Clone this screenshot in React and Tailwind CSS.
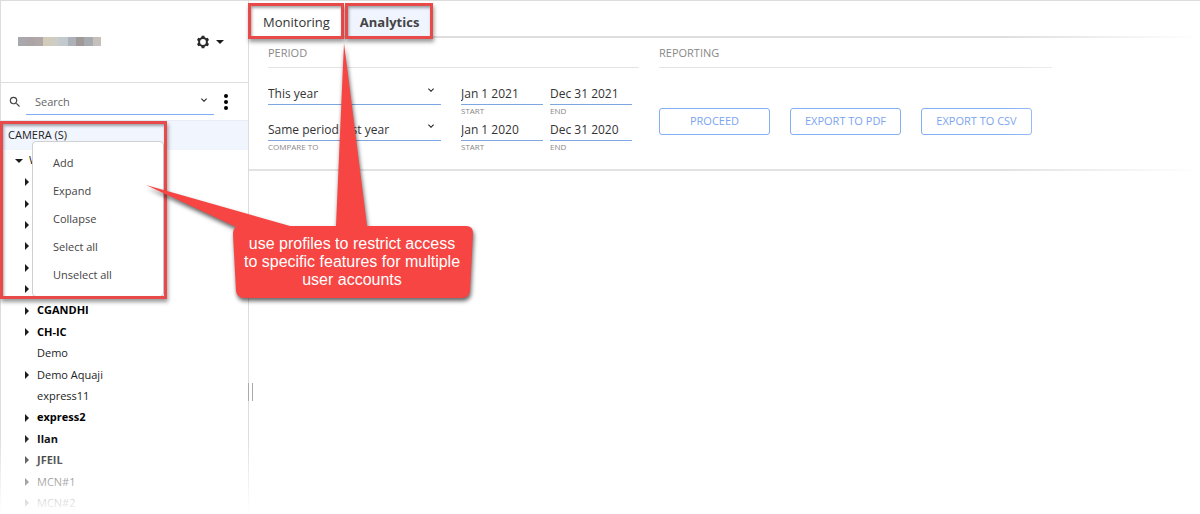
import React, { useState } from 'react';
import { MdSearch, MdKeyboardArrowDown } from 'react-icons/md';

const TREE = [
  { label: '' },
  { label: '' },
  { label: '' },
  { label: '' },
  { label: '' },
  { label: '' },
  { label: 'CGANDHI', bold: true },
  { label: 'CH-IC', bold: true },
  { label: 'Demo', leaf: true },
  { label: 'Demo Aquaji' },
  { label: 'express11', leaf: true },
  { label: 'express2', bold: true },
  { label: 'Ilan', bold: true },
  { label: 'JFEIL', bold: true },
  { label: 'MCN#1' },
  { label: 'MCN#2' },
];

const MENU_ITEMS = ['Add', 'Expand', 'Collapse', 'Select all', 'Unselect all'];

const MOSAIC = [
  'bg-[#a9a9ad]',
  'bg-[#aca5a8]',
  'bg-[#b0a8a6]',
  'bg-[#d3cbb9]',
  'bg-[#cdcdc6]',
  'bg-[#c3cacf]',
  'bg-[#aeb2b8]',
  'bg-[#9f9998]',
  'bg-[#a5abaf]',
  'bg-[#c5c0bc]',
];

const Gear = () => (
  <svg viewBox="-7 -7 14 14" className="size-3.5 shrink-0" aria-hidden="true">
    <circle r="3.9" fill="none" stroke="#2a2a2a" strokeWidth="2" />
    {[0, 60, 120, 180, 240, 300].map(a => (
      <path key={a} d="M-1.3 -6.2h2.6l.5 2.2h-3.6z" fill="#2a2a2a" transform={`rotate(${a})`} />
    ))}
  </svg>
);

const Caret = ({ down }) => (
  <svg viewBox="0 0 8 8" className="size-2 shrink-0 fill-[#1c1c1c]" aria-hidden="true">
    {down ? <path d="M0 2h8L4 6z" /> : <path d="M2 0v8l4-4z" />}
  </svg>
);

const SelectField = ({ id, options, label }) => (
  <div className="relative h-9 w-[173px]">
    <select
      id={id}
      aria-label={label ? undefined : 'Period'}
      className="block h-[21px] w-full appearance-none border-b border-[#7ea6e0] bg-transparent text-xs text-[#333] outline-none"
    >
      {options.map(o => <option key={o}>{o}</option>)}
    </select>
    <MdKeyboardArrowDown className="pointer-events-none absolute right-1 top-0 size-3 text-[#222]" />
    {label && <label htmlFor={id} className="block text-[8px] leading-3 text-[#888]">{label}</label>}
  </div>
);

const DateField = ({ id, value, label }) => (
  <div className="h-9 w-[82px]">
    <input
      id={id}
      defaultValue={value}
      className="block h-[21px] w-full border-b border-[#7ea6e0] bg-transparent pb-0.5 text-xs text-[#333] outline-none"
    />
    <label htmlFor={id} className="block text-[8px] leading-3 text-[#888]">{label}</label>
  </div>
);

const Sidebar = () => (
  <aside className="relative flex w-[249px] shrink-0 flex-col border-x border-[#dcdcdc]">
    <div className="flex h-[82px] items-center border-b border-[#dedede] pl-[17px] pr-6">
      <div className="flex h-[9px] w-[83px]">
        {MOSAIC.map(c => <span key={c} className={`flex-1 ${c}`}></span>)}
      </div>
      <button className="ml-auto flex items-center gap-1.5" aria-label="Settings">
        <Gear />
        <Caret down />
      </button>
    </div>

    <div className="flex h-[38px] items-center border-b border-[#e9edf5] pl-[7px] pr-[17px]">
      <MdSearch className="size-3.5 shrink-0 text-[#444]" />
      <div className="relative ml-1 w-[188px]">
        <input
          type="text"
          placeholder="Search"
          aria-label="Search"
          className="block h-[27px] w-full border-b border-[#7fb0f5] pl-[9px] text-[11px] text-[#333] outline-none placeholder:text-[#666]"
        />
        <MdKeyboardArrowDown className="pointer-events-none absolute right-1 top-1.5 size-3 text-[#222]" />
      </div>
      <button className="ml-2.5 flex flex-col gap-0.5" aria-label="More">
        <span className="size-1 rounded-full bg-black"></span>
        <span className="size-1 rounded-full bg-black"></span>
        <span className="size-1 rounded-full bg-black"></span>
      </button>
    </div>

    {/* Camera tree */}
    <h2 className="flex h-[29px] shrink-0 items-center bg-[#f1f5fe] pl-[7px] text-[11px] text-[#222]">CAMERA (S)</h2>
    <ul className="flex flex-1 flex-col text-[11px] text-[#222]">
      <li className="flex flex-1 items-center gap-1.5 pl-3.5">
        <Caret down />
        <span>W</span>
      </li>
      {TREE.map((node, i) => (
        <li key={i} className={`flex flex-1 items-center gap-1.5 pl-[22px] ${node.bold ? 'font-bold text-black' : ''}`}>
          {node.leaf ? <span className="size-2"></span> : <Caret />}
          <span>{node.label}</span>
        </li>
      ))}
    </ul>

    {/* Context menu */}
    <div className="absolute left-[31px] top-[140px] w-[132px] rounded-sm border border-[#d0d0d0] bg-white py-[7px]">
      {MENU_ITEMS.map(item => (
        <button key={item} className="block h-7 w-full pl-5 text-left text-[11px] text-[#444]">{item}</button>
      ))}
    </div>
    <div className="pointer-events-none absolute -left-px top-[120px] h-[178px] w-[167px] border-3 border-[#e84a4a] shadow-[1px_3px_4px_rgba(0,0,0,0.4),inset_1px_2px_3px_rgba(0,0,0,0.35)]"></div>

    {/* Splitter handle */}
    <div className="absolute -right-[5px] top-[382px] h-[18px] w-[5px] border-x border-[#aaa]"></div>
  </aside>
);

const Callout = () => (
  <div className="pointer-events-none absolute left-[146px] top-10 h-[264px] w-[332px]">
    <svg viewBox="0 0 332 264" className="h-full w-full overflow-visible drop-shadow-[1px_3px_2px_rgba(0,0,0,0.6)]" aria-hidden="true">
      <path
        fill="#f64543"
        d="M198 2 L190 185 H144 L0 144 L90 186 Q87 188 87 193 L90 250 Q91 257 98 257 H316 Q323 257 324 250 L327 192 Q327 185 320 185 H221 Z"
      />
    </svg>
    <p className="absolute left-[86px] top-[194px] w-[240px] text-center font-['Liberation_Sans',sans-serif] text-base leading-[18px] text-white">
      use profiles to restrict access<br />to specific features for multiple<br />user accounts
    </p>
  </div>
);

const App = () => {
  const [tab, setTab] = useState('Analytics');

  return (
    <div className="relative flex min-h-screen overflow-hidden border-t border-[#dcdcdc] bg-white font-['Open_Sans',sans-serif]">
      <Sidebar />

      <main className="min-w-0 flex-1">
        <nav className="flex h-[37px] gap-0.5 border-b-2 border-[#dedede] pt-1">
          {['Monitoring', 'Analytics'].map(name => (
            <div key={name} className="relative">
              <button
                onClick={() => setTab(name)}
                className={`h-[33px] px-3.5 pt-0.5 text-[13px] ${tab === name ? 'bg-[#eff4fe] font-bold text-[#444]' : 'text-[#333]'}`}
              >
                {name}
              </button>
              <div className="pointer-events-none absolute -left-px -top-0.5 right-0 h-9 border-3 border-[#e84a4a] shadow-[1px_3px_4px_rgba(0,0,0,0.4),inset_1px_2px_3px_rgba(0,0,0,0.35)]"></div>
            </div>
          ))}
        </nav>

        <div className="flex gap-5 border-b-2 border-[#e2e2e2] pb-[13px] pl-[19px]">
          <section className="w-[371px]">
            <h3 className="h-[30px] border-b border-[#e4e4e4] text-[11px] leading-[30px] text-[#888]">PERIOD</h3>
            <div className="flex pt-4">
              <div className="mr-5">
                <SelectField id="period" options={['This year', 'This month']} />
                <SelectField id="compare" options={['Same period last year', 'Previous period']} label="COMPARE TO" />
              </div>
              <div className="grid grid-cols-2 gap-x-[7px]">
                <DateField id="start" value="Jan 1 2021" label="START" />
                <DateField id="end" value="Dec 31 2021" label="END" />
                <DateField id="cmp-start" value="Jan 1 2020" label="START" />
                <DateField id="cmp-end" value="Dec 31 2020" label="END" />
              </div>
            </div>
          </section>

          <section className="w-[393px]">
            <h3 className="h-[30px] border-b border-[#e4e4e4] text-[11px] leading-[30px] text-[#888]">REPORTING</h3>
            <div className="flex gap-5 pt-10">
              {['PROCEED', 'EXPORT TO PDF', 'EXPORT TO CSV'].map(name => (
                <button key={name} className="h-[27px] w-[111px] rounded-[3px] border border-[#82aff5] text-[11px] text-[#7ba4ef]">
                  {name}
                </button>
              ))}
            </div>
          </section>
        </div>
      </main>

      <Callout />

      {/* Faded edges */}
      <div className="pointer-events-none absolute inset-x-0 bottom-0 h-20 bg-linear-to-t from-white to-transparent"></div>
      <div className="pointer-events-none absolute inset-y-0 right-0 w-[200px] bg-linear-to-l from-white to-transparent"></div>
    </div>
  );
};

export default App;
